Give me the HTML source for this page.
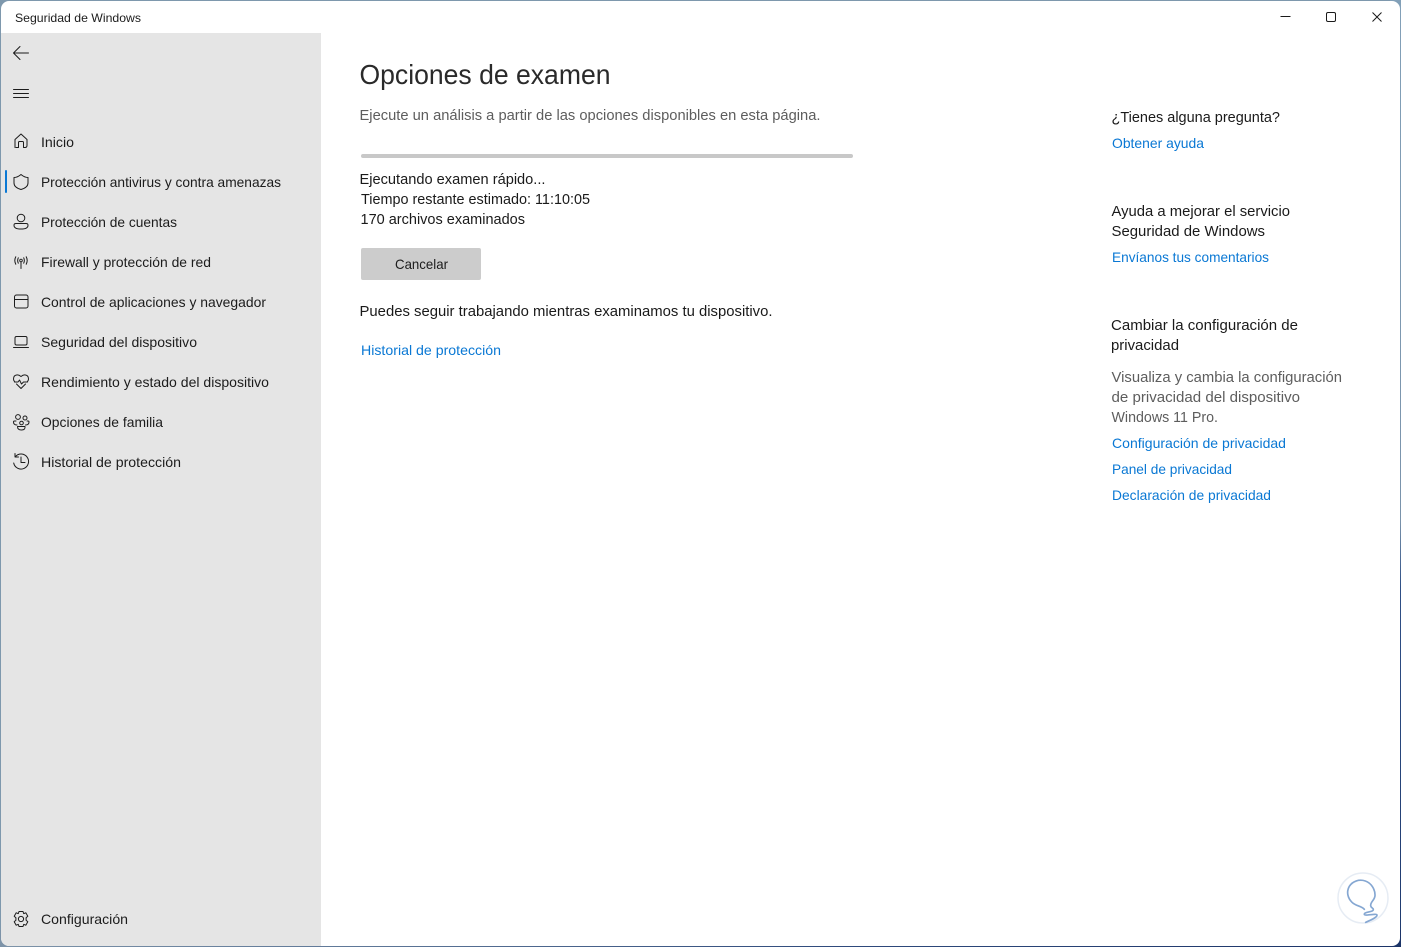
<!DOCTYPE html>
<html lang="es">
<head>
<meta charset="utf-8">
<title>Seguridad de Windows</title>
<style>
html,body{margin:0;padding:0;width:1401px;height:947px;overflow:hidden;background:#fff}
svg{display:block}
text{font-family:"Liberation Sans",sans-serif;font-size:14px;fill:#1c1c1c}
.m{font-size:15px;fill:#1a1a1a}
.g{font-size:15px;fill:#5d5d5d}
.l{fill:#0a78d4}
.i{fill:none;stroke:#1c1c1c;stroke-width:1;stroke-linecap:round;stroke-linejoin:round}
</style>
</head>
<body>
<svg width="1401" height="947" viewBox="0 0 1401 947" xmlns="http://www.w3.org/2000/svg">
<defs>
<linearGradient id="bg" x1="0" y1="0" x2="0" y2="1">
<stop offset="0" stop-color="#82a0b8"/><stop offset=".55" stop-color="#7a93ab"/><stop offset=".62" stop-color="#2f4f86"/><stop offset="1" stop-color="#1f3a6e"/>
</linearGradient>
<linearGradient id="bb" x1="0" y1="0" x2="1" y2="0">
<stop offset="0" stop-color="#7d93a8"/><stop offset=".25" stop-color="#5f7898"/><stop offset=".6" stop-color="#2f4a7c"/><stop offset="1" stop-color="#1c3468"/>
</linearGradient>
<clipPath id="w"><rect x="1" y="1" width="1399" height="945" rx="8"/></clipPath>
</defs>
<rect width="1401" height="947" fill="#7e98ad"/>
<rect x="1390" width="11" height="947" fill="url(#bg)"/>
<rect y="930" width="1401" height="17" fill="url(#bb)"/>
<g clip-path="url(#w)">
<rect x="1" y="1" width="1399" height="945" fill="#fff"/>
<rect x="1" y="33" width="320" height="913" fill="#e5e5e5"/>
</g>

<text x="15" y="22" style="font-size:12px" textLength="126" lengthAdjust="spacingAndGlyphs">Seguridad de Windows</text>

<!-- window controls -->
<path d="M1280.5 16.5H1290.5" stroke="#1a1a1a" stroke-width="1" fill="none"/>
<rect x="1326.5" y="12.5" width="9" height="9" rx="1.5" fill="none" stroke="#1a1a1a" stroke-width="1"/>
<path d="M1372.5 12.5L1381.5 21.5M1381.5 12.5L1372.5 21.5" stroke="#1a1a1a" stroke-width="1" fill="none"/>

<!-- back + menu -->
<path class="i" d="M13.5 53H28.5M20 46.5L13.5 53L20 59.5"/>
<path class="i" d="M13.5 89.5H28.5M13.5 93.5H28.5M13.5 97.5H28.5"/>

<!-- nav icons -->
<path class="i" d="M15 147.500V139.500L21 134L27 139.500V145.500Q27 147.500 25 147.500H23.500V142.500Q23.500 141.500 22.500 141.500H19.500Q18.500 141.500 18.500 142.500V147.500H16"/>
<rect x="5" y="170" width="2" height="23" rx="1" fill="#0a78d4"/>
<path class="i" d="M21 174.500Q24.500 177.500 28 177.500V183Q28 187.500 21 189.500Q14 187.500 14 183V177.500Q17.500 177.500 21 174.500Z"/>
<circle class="i" cx="21" cy="218" r="3.800"/>
<path class="i" d="M16 223.500H26Q28 223.500 28 225.200Q28 229 21 229Q14 229 14 225.200Q14 223.500 16 223.500Z"/>
<circle cx="21" cy="260.500" r="1.300" fill="none" stroke="#1c1c1c" stroke-width=".9"/>
<path class="i" d="M21 262V268.500M18.300 257.800Q17 260.500 18.300 263.200M23.700 257.800Q25 260.500 23.700 263.200M15.800 256.800Q13.800 260.500 15.800 264.200M26.200 256.800Q28.200 260.500 26.200 264.200"/>
<rect class="i" x="14.500" y="295" width="13.500" height="13" rx="2"/>
<path class="i" d="M14.500 299.500H28"/>
<rect class="i" x="15" y="336.500" width="12" height="8.500" rx="1.500"/>
<path class="i" d="M13.500 347.500H28.500"/>
<path class="i" d="M21 376.500Q18.500 374.500 16.500 375Q13.500 375.500 13.500 379Q13.500 380.500 14.500 381.500M21 376.500Q23.500 374.500 25.500 375Q28.500 375.500 28.500 379Q28.500 380.500 27.500 381.500M14.500 382H18L19.500 380L21.500 384L23.500 382H27.500M16.500 384L21 388.500L25.500 384"/>
<circle class="i" cx="18" cy="417" r="2.400"/><circle class="i" cx="25" cy="418" r="2"/><circle class="i" cx="21.500" cy="423" r="1.800"/>
<path class="i" d="M16 421H14.500Q13.500 421 13.500 422Q13.500 425 17 425M27 421H28Q29 421 29 422Q29 425 25.500 425M17.500 426.500H25Q25.500 430 21.500 430Q17.500 430 17.500 426.500Z"/>
<path class="i" d="M15.500 456.500A7.500 7.500 0 1 1 13.700 463M15 453.500V457H18.500M21 457V462.500H25"/>
<g class="i" transform="translate(21 919)">
<circle r="2.600"/>
<path d="M-2 -7.500H2L2.700 -5.400L4.800 -6.200L6.800 -2.800L5.100 -1.300V1.300L6.800 2.800L4.800 6.200L2.700 5.400L2 7.500H-2L-2.700 5.400L-4.800 6.200L-6.800 2.800L-5.100 1.300V-1.300L-6.800 -2.800L-4.800 -6.200L-2.700 -5.400Z"/>
</g>

<!-- nav labels -->
<text x="41" y="147" textLength="33" lengthAdjust="spacingAndGlyphs">Inicio</text>
<text x="41" y="187" textLength="240" lengthAdjust="spacingAndGlyphs">Protección antivirus y contra amenazas</text>
<text x="41" y="227" textLength="136" lengthAdjust="spacingAndGlyphs">Protección de cuentas</text>
<text x="41" y="267" textLength="170" lengthAdjust="spacingAndGlyphs">Firewall y protección de red</text>
<text x="41" y="307" textLength="225" lengthAdjust="spacingAndGlyphs">Control de aplicaciones y navegador</text>
<text x="41" y="347" textLength="156" lengthAdjust="spacingAndGlyphs">Seguridad del dispositivo</text>
<text x="41" y="387" textLength="228" lengthAdjust="spacingAndGlyphs">Rendimiento y estado del dispositivo</text>
<text x="41" y="427" textLength="122" lengthAdjust="spacingAndGlyphs">Opciones de familia</text>
<text x="41" y="467" textLength="140" lengthAdjust="spacingAndGlyphs">Historial de protección</text>
<text x="41" y="924" textLength="87" lengthAdjust="spacingAndGlyphs">Configuración</text>

<!-- main -->
<text x="359.500" y="84" style="font-size:28px;fill:#2a2a2a" textLength="251" lengthAdjust="spacingAndGlyphs">Opciones de examen</text>
<text class="g" x="359.500" y="120" textLength="461" lengthAdjust="spacingAndGlyphs">Ejecute un análisis a partir de las opciones disponibles en esta página.</text>
<rect x="361" y="154" width="492" height="4" rx="2" fill="#c8c8c8"/>
<text class="m" x="359.500" y="184" textLength="186" lengthAdjust="spacingAndGlyphs">Ejecutando examen rápido...</text>
<text class="m" x="361" y="204" textLength="229" lengthAdjust="spacingAndGlyphs">Tiempo restante estimado: 11:10:05</text>
<text class="m" x="360.500" y="224" textLength="164.500" lengthAdjust="spacingAndGlyphs">170 archivos examinados</text>
<rect x="361" y="248" width="120" height="32" rx="2" fill="#cccccc"/>
<text x="395" y="269" textLength="53" lengthAdjust="spacingAndGlyphs">Cancelar</text>
<text class="m" x="359.500" y="316" textLength="413" lengthAdjust="spacingAndGlyphs">Puedes seguir trabajando mientras examinamos tu dispositivo.</text>
<text class="l" x="361" y="355" textLength="140" lengthAdjust="spacingAndGlyphs">Historial de protección</text>

<!-- right column -->
<text class="m" x="1111.500" y="122" textLength="168.500" lengthAdjust="spacingAndGlyphs">¿Tienes alguna pregunta?</text>
<text class="l" x="1112" y="148" textLength="92" lengthAdjust="spacingAndGlyphs">Obtener ayuda</text>
<text class="m" x="1111.500" y="216" textLength="178.500" lengthAdjust="spacingAndGlyphs">Ayuda a mejorar el servicio</text>
<text class="m" x="1111.500" y="236" textLength="153.500" lengthAdjust="spacingAndGlyphs">Seguridad de Windows</text>
<text class="l" x="1112" y="262" textLength="157" lengthAdjust="spacingAndGlyphs">Envíanos tus comentarios</text>
<text class="m" x="1111" y="330" textLength="187" lengthAdjust="spacingAndGlyphs">Cambiar la configuración de</text>
<text class="m" x="1111" y="350" textLength="68" lengthAdjust="spacingAndGlyphs">privacidad</text>
<text class="g" x="1111.500" y="382" textLength="230.500" lengthAdjust="spacingAndGlyphs">Visualiza y cambia la configuración</text>
<text class="g" x="1111.500" y="402" textLength="188.500" lengthAdjust="spacingAndGlyphs">de privacidad del dispositivo</text>
<text class="g" x="1111.500" y="422" textLength="106.500" lengthAdjust="spacingAndGlyphs">Windows 11 Pro.</text>
<text class="l" x="1112" y="448" textLength="174" lengthAdjust="spacingAndGlyphs">Configuración de privacidad</text>
<text class="l" x="1112" y="474" textLength="120" lengthAdjust="spacingAndGlyphs">Panel de privacidad</text>
<text class="l" x="1112" y="500" textLength="159" lengthAdjust="spacingAndGlyphs">Declaración de privacidad</text>

<!-- watermark -->
<circle cx="1363" cy="898" r="25" fill="#fff" stroke="#e6ecf4" stroke-width="1.500"/>
<g transform="translate(1320 865) scale(.3333)" fill="none" stroke="#85a7d2" stroke-width="5" stroke-linecap="round" stroke-linejoin="round">
<path d="M133 133C124 122 108 124 96 112C84 100 78 82 88 64C98 48 118 42 136 48C154 54 166 74 165 92C164 106 151 110 152 122C153 130 160 128 160 134C160 142 132 140 133 148C134 154 170 144 171 150C172 158 150 166 137 172"/>
</g>
</svg>
</body>
</html>
